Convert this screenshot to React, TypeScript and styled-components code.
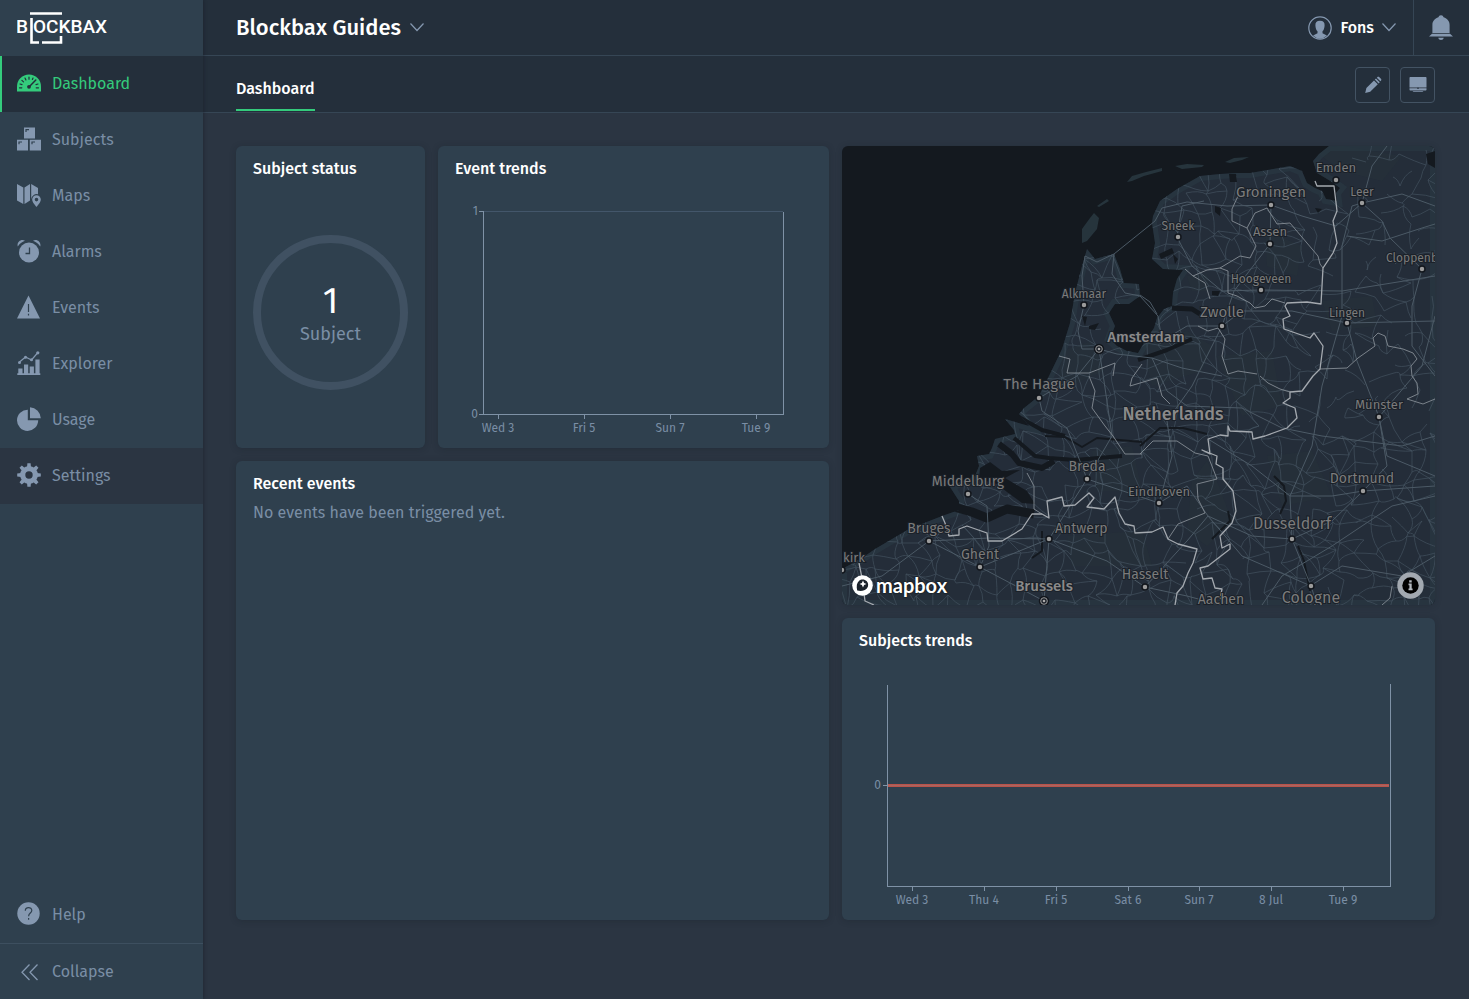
import React from "react";
import styled, { createGlobalStyle } from "styled-components";

const c = {
  page: "#2b3542",
  header: "#242f3b",
  panel: "#2f404e",
  line: "#364655",
  muted: "#7a8ea5",
  icon: "#8598b0",
  axis: "#7f92a6",
  green: "#34cb7c",
  sea: "#14191f",
  land: "#242d39",
};

const GlobalStyle = createGlobalStyle`
  *, *::before, *::after { box-sizing: border-box; }
  body {
    margin: 0;
    background: ${c.page};
    color: #fff;
    font-family: "Fira Sans", "Noto Sans", sans-serif;
    font-size: 16px;
    line-height: 22px;
  }
  a { color: inherit; text-decoration: none; }
  button { font: inherit; color: inherit; background: none; border: 0; padding: 0; cursor: pointer; }
`;

const Shell = styled.div`
  display: flex;
  min-height: 100vh;
`;

const Sidebar = styled.aside`
  position: sticky;
  top: 0;
  display: flex;
  flex-direction: column;
  flex: 0 0 203px;
  height: 100vh;
  background: ${c.panel};
  color: ${c.muted};
  box-shadow: 1px 0 3px rgba(20, 26, 34, 0.4);
`;

const Brand = styled.a`
  display: flex;
  align-items: center;
  height: 56px;
  padding-left: 17px;
`;

const Nav = styled.nav`
  display: flex;
  flex-direction: column;
  flex: 1;
`;

const NavItem = styled.a<{ $active?: boolean; $shaded?: boolean; $last?: boolean }>`
  display: flex;
  align-items: center;
  gap: 11px;
  height: 56px;
  padding: 0 0 2px 15px;
  border-left: 2px solid ${(p) => (p.$active ? c.green : "transparent")};
  background: ${(p) => (p.$active ? c.header : p.$shaded ? c.page : "transparent")};
  color: ${(p) => (p.$active ? c.green : c.muted)};
  margin-top: ${(p) => (p.$last ? "auto" : "0")};

  svg { color: ${(p) => (p.$active ? c.green : c.icon)}; }
`;

const NavLabel = styled.span`
  padding-top: 2px;
`;

const Collapse = styled.button`
  display: flex;
  align-items: center;
  gap: 11px;
  height: 56px;
  padding-left: 17px;
  border-top: 1px solid #3d4f5f;
  text-align: left;
`;

const Main = styled.main`
  flex: 1;
  min-width: 0;
`;

const TopBar = styled.header`
  display: flex;
  align-items: stretch;
  justify-content: space-between;
  height: 56px;
  padding-left: 33px;
  background: ${c.header};
  border-bottom: 1px solid ${c.line};
`;

const ProjectMenu = styled.button`
  display: flex;
  align-items: center;
  gap: 9px;
  font-size: 22px;
  font-weight: 500;
`;

const Account = styled.div`
  display: flex;
`;

const UserMenu = styled.button`
  display: flex;
  align-items: center;
  gap: 8px;
  padding-right: 17px;
  font-weight: 500;
`;

const BellButton = styled.button`
  display: flex;
  align-items: center;
  justify-content: center;
  width: 56px;
  padding-right: 2px;
  border-left: 1px solid ${c.line};
`;

const TabBar = styled.div`
  display: flex;
  align-items: center;
  justify-content: space-between;
  height: 57px;
  padding: 1px 34px 0 33px;
  background: ${c.header};
  border-bottom: 1px solid ${c.line};
`;

const Tab = styled.a`
  align-self: flex-end;
  padding: 0 0 9px;
  margin-bottom: 1px;
  border-bottom: 2px solid ${c.green};
  font-weight: 500;
`;

const Tools = styled.div`
  display: flex;
  gap: 10px;
`;

const ToolButton = styled.button`
  display: flex;
  align-items: center;
  justify-content: center;
  width: 35px;
  height: 36px;
  border: 1px solid #435363;
  border-radius: 4px;
`;

const Board = styled.div`
  display: grid;
  grid-template-columns: repeat(6, minmax(0, 1fr));
  grid-template-rows: 302px 144px 302px;
  gap: 13px;
  padding: 33px 34px 33px 33px;
`;

const Card = styled.section<{ $col: string; $row: string }>`
  grid-column: ${(p) => p.$col};
  grid-row: ${(p) => p.$row};
  display: flex;
  flex-direction: column;
  min-width: 0;
  padding: 12px 17px 3px;
  border-radius: 6px;
  background: ${c.panel};
  box-shadow: 0 1px 6px rgba(20, 26, 34, 0.25);
`;

const MapCard = styled(Card)`
  position: relative;
  padding: 0;
  overflow: hidden;
  background: ${c.sea};
`;

const CardTitle = styled.h2`
  margin: 0;
  font-size: 16px;
  font-weight: 500;
  line-height: 22px;
`;

const CardText = styled.p`
  margin: 7px 0 0;
  color: ${c.muted};
`;

const RingArea = styled.div`
  display: flex;
  flex: 1;
  align-items: center;
  justify-content: center;
`;

const Ring = styled.div`
  display: flex;
  flex-direction: column;
  align-items: center;
  justify-content: center;
  width: 100%;
  max-width: 200px;
  aspect-ratio: 1;
  border: 8px solid #405162;
  border-radius: 50%;
  color: ${c.muted};
  font-size: 18px;
  line-height: 24px;
`;

const Count = styled.strong`
  color: #fff;
  font-size: 36px;
  font-weight: 400;
  line-height: 42px;
`;

const ChartSvg = styled.svg`
  flex: 1;
  width: 100%;
  min-height: 0;
  margin-top: 10px;
  overflow: visible;

  text { fill: ${c.muted}; font-size: 12px; }
  line, path { shape-rendering: crispEdges; }
`;

const MapSvg = styled.svg`
  width: 100%;
  height: 100%;
`;

const MapBrand = styled.a`
  position: absolute;
  left: 10px;
  bottom: 9px;
  display: flex;
  align-items: center;
  gap: 3px;
  font-family: Lato, sans-serif;
  font-size: 20px;
  font-weight: 700;
  text-shadow: 0 0 2px #000;
`;

const InfoButton = styled.button`
  position: absolute;
  right: 11px;
  bottom: 6px;
  display: flex;
`;

/* ---------- icons ---------- */

const Icon = ({ children, size = 24 }: { children: React.ReactNode; size?: number }) => (
  <svg width={size} height={size} viewBox="0 0 24 24" fill="currentColor" aria-hidden="true">
    {children}
  </svg>
);

const GaugeIcon = () => (
  <Icon>
    <path d="M0 20.500V15.500a12 12 0 0 1 24 0v5z" />
    <g stroke={c.header} strokeWidth="1.200" strokeLinecap="round" fill="none">
      <path d="M12 6v2.200M8 7l.9 2M16 7l-.6 1.400M4.900 9.400l1.600 1.500M3 13l2 .6M2.500 16.800h2.300M21.500 16.800h-2.300M21 13l-2 .6" />
      <path d="M18.800 9l-6.300 6.500" strokeWidth="1.500" />
    </g>
    <circle cx="12" cy="15.800" r="1.900" fill={c.header} />
  </Icon>
);

const BoxesIcon = () => (
  <Icon>
    <path d="M7 .5h11v11H7zM0 12.800h11v10.700H0zM12.800 12.800H24v10.700H12.800z" />
    <path d="M9 5V2.700h3M2 17.300V15h3M15 17.300V15h3" stroke={c.panel} strokeWidth="1.200" fill="none" />
  </Icon>
);

const MapIcon = () => (
  <Icon>
    <path d="M0 1l6.300 3.500V21L0 17.500zM7.500 4.500L13 1v16.500L7.500 21zM14.200 1L21 5v6.300a5.500 5.500 0 0 0-6.800 4.900z" />
    <path fillRule="evenodd" d="M19.500 12.300a4.300 4.300 0 0 0-4.300 4.300c0 3 4.300 7.400 4.300 7.400s4.300-4.400 4.300-7.400a4.300 4.300 0 0 0-4.300-4.300zm0 2.500a1.800 1.800 0 1 1 0 3.600 1.800 1.800 0 0 1 0-3.600z" />
  </Icon>
);

const AlarmIcon = () => (
  <Icon>
    <circle cx="12" cy="13.500" r="10" />
    <path d="M.8 7.500C-.6 3.500 4-.6 8 1.800 5 2.900 2.600 4.800.8 7.500zM23.200 7.500C24.600 3.500 20-.6 16 1.800c3 1.100 5.400 3 7.200 5.700z" />
    <path d="M12.500 8.500v6H8.500" stroke={c.panel} strokeWidth="1.300" fill="none" />
  </Icon>
);

const WarningIcon = () => (
  <Icon>
    <path d="M11.500.5L23 23.500H0z" />
    <path d="M11.500 9v8M11.500 18.800v1.700" stroke={c.panel} strokeWidth="1.200" />
  </Icon>
);

const ExplorerIcon = () => (
  <Icon>
    <path d="M.3 22.300h23V24H.3zM1.300 17.500h4.200v5H1.300zM7 13.500h4.200v9H7zM12.700 15.500h4.200v7h-4.200zM18.400 8.500h4.200v14h-4.200z" />
    <path d="M2.500 11l6-5 6 3L20.500 2" stroke="currentColor" strokeWidth="1.200" fill="none" />
    <circle cx="2.500" cy="11.500" r="1.500" /><circle cx="8.500" cy="6.300" r="1.500" />
    <circle cx="14.500" cy="8.800" r="1.500" /><circle cx="20.800" cy="1.800" r="1.600" />
  </Icon>
);

const PieIcon = () => (
  <Icon>
    <path d="M10.800 2.700v10.600h10.400A10.600 10.600 0 1 1 10.800 2.700z" />
    <path d="M13 .3A11.200 11.200 0 0 1 23.800 11.300H13z" />
  </Icon>
);

const teeth = [0, 45, 90, 135, 180, 225, 270, 315];
const GearIcon = () => (
  <Icon>
    <circle cx="12" cy="12" r="6.300" fill="none" stroke="currentColor" strokeWidth="5.200" />
    {teeth.map((a) => (
      <path key={a} d="M10 4.200L10.400.2h3.200L14 4.200z" transform={`rotate(${a} 12 12)`} />
    ))}
  </Icon>
);

const HelpIcon = () => (
  <Icon>
    <circle cx="11.500" cy="11.500" r="11.200" />
    <path d="M8.300 8.700c0-4.200 6.500-4 6.500-.3 0 2.700-3.200 2.600-3.200 5.800M11.600 16v1.700" stroke={c.panel} strokeWidth="1.200" fill="none" />
  </Icon>
);

const CollapseIcon = () => (
  <Icon>
    <path d="M12.500 4.500L5 12.300l7.500 7.700M20.500 4.500L13 12.300l7.500 7.700" stroke={c.icon} strokeWidth="1.300" fill="none" />
  </Icon>
);

const ChevronDown = () => (
  <svg width="14" height="10" viewBox="0 0 14 10" fill="none" stroke={c.icon} strokeWidth="1.200" aria-hidden="true">
    <path d="M.5 .5L7 7.500 13.500 .5" />
  </svg>
);

const UserIcon = () => (
  <svg width="24" height="24" viewBox="0 0 24 24" aria-hidden="true">
    <circle cx="12" cy="12" r="11.200" fill="none" stroke={c.icon} strokeWidth="1.200" />
    <path d="M12 4.700c3.300 0 4.900 1.700 4.600 5-.2 2.700-1 4.500-2.100 5.600v2l4.400 2.300A10.500 10.500 0 0 1 12 22.700a10.500 10.500 0 0 1-6.900-3.100l4.400-2.300v-2c-1.100-1.100-1.900-2.900-2.100-5.600-.3-3.300 1.300-5 4.600-5z" fill={c.icon} />
  </svg>
);

const BellIcon = () => (
  <svg width="24" height="26" viewBox="0 0 24 26" fill={c.icon} aria-hidden="true">
    <path d="M12 .3a2.600 2.600 0 0 1 2.600 2c3.700 1.100 6 4 6 7.700v8H3.400V10c0-3.700 2.300-6.600 6-7.700A2.600 2.600 0 0 1 12 .3zM3 18.800h18l3 2.700H0zM9.300 22.700h5.400c-.3 3-5.100 3-5.400 0z" />
  </svg>
);

const PencilIcon = () => (
  <svg width="18" height="18" viewBox="0 0 18 18" fill={c.icon} aria-hidden="true">
    <path d="M1.200 17l1.200-5L10 4.400 13.800 8.200 6.200 15.800zM10.800 3.600L12 2.400l3.800 3.800-1.200 1.200zM12.800 1.700l.5-.5c.6-.6 1.500-.6 2.100 0l1.500 1.500c.6.600.6 1.500 0 2.100l-.5.500z" />
  </svg>
);

const ScreenIcon = () => (
  <svg width="18" height="18" viewBox="0 0 18 18" fill={c.icon} aria-hidden="true">
    <path d="M1.500 1h15c.6 0 1 .4 1 1v9.500H.5V2c0-.6.400-1 1-1zM.5 12.300h17v1.200c0 .6-.4 1-1 1h-15c-.6 0-1-.4-1-1zM3.500 15.200h11l-1 .8h-9z" />
    <circle cx="9" cy="12.200" r=".8" fill={c.header} />
  </svg>
);

const Logo = () => (
  <svg width="92" height="36" viewBox="17 10 92 36" role="img" aria-label="Blockbax">
    <g fill="#fff" fontFamily="Roboto, sans-serif" fontSize="19" fontWeight="500">
      <text x="16" y="33">B</text>
      <text x="33" y="33">OCKBAX</text>
    </g>
    <path d="M30 13.500h32M31.500 18v24.500H39M42 42.500h19V36" stroke="#fff" strokeWidth="2.600" fill="none" />
  </svg>
);

/* ---------- charts ---------- */

type Tick = { x: number; label: string };

const eventTicks: Tick[] = [
  { x: 43, label: "Wed 3" },
  { x: 129, label: "Fri 5" },
  { x: 215, label: "Sun 7" },
  { x: 301, label: "Tue 9" },
];

const subjectTicks: Tick[] = [
  { x: 53, label: "Wed 3" },
  { x: 125, label: "Thu 4" },
  { x: 197, label: "Fri 5" },
  { x: 269, label: "Sat 6" },
  { x: 340, label: "Sun 7" },
  { x: 412, label: "8 Jul" },
  { x: 484, label: "Tue 9" },
];

const TimeAxis = ({ ticks }: { ticks: Tick[] }) => (
  <g textAnchor="middle">
    {ticks.map((t) => (
      <g key={t.label}>
        <line x1={t.x + 0.5} x2={t.x + 0.5} y1="225" y2="229" stroke={c.axis} />
        <text x={t.x} y="242">{t.label}</text>
      </g>
    ))}
  </g>
);

const EventChart = () => (
  <ChartSvg viewBox="0 0 357 255" role="img" aria-label="Event trends">
    <line x1="29" x2="328" y1="21.500" y2="21.500" stroke="#43566a" />
    <path d="M24 21.500H28.500V224.500H328.500V21.500M24 224.500H29" fill="none" stroke={c.axis} />
    <text x="23" y="25" textAnchor="end">1</text>
    <text x="23" y="228" textAnchor="end">0</text>
    <TimeAxis ticks={eventTicks} />
  </ChartSvg>
);

const SubjectChart = () => (
  <ChartSvg viewBox="0 0 559 255" role="img" aria-label="Subjects trends">
    <path d="M28.500 23V224.500H531.500V22M24 123.500H28" fill="none" stroke={c.axis} />
    <path d="M29 123.500H530" stroke="#b9534b" strokeWidth="3" />
    <path d="M29 123.500H530" stroke="#a96660" strokeWidth="1" />
    <text x="22" y="127" textAnchor="end">0</text>
    <TimeAxis ticks={subjectTicks} />
  </ChartSvg>
);

/* ---------- map ---------- */

const coast =
  "M487 0L477 8 471 15 475 27 490 36 498 42 494 47 495 55 484 53 480 45 473 42 465 37 460 25 448 20 431 23 408 27 395 27 378 28 358 30 335 43 318 55 311 70 310 77 313 97 310 113 321 123 341 124 335 133 331 147 330 160 322 163 315 172 312 182 303 195 296 207 285 205 275 200 268 193 273 180 267 167 273 158 287 158 298 150 297 138 282 137 278 123 272 108 253 113 245 103 240 120 233 147 228 177 220 203 207 230 197 250 182 262 177 268 187 280 163 273 172 284 173 288 153 293 150 302 147 308 135 310 137 320 133 330 118 336 108 341 117 355 117 364 100 370 67 383 33 403 20 412 0 423V459H593V0Z";

const islands =
  "M252 67L257 72 255 83 245 95 240 97 240 83 248 72ZM255 60L265 53 267 55 257 61ZM285 36L290 30 304 26 320 22 320 25 302 30 290 35ZM333 20L345 18 362 19 360 21 340 23ZM383 16L392 12 407 11 400 14 388 17Z";

const greens =
  "M300 196L345 185 370 200 360 225 310 240ZM423 85L460 100 455 130 425 120ZM345 130L365 128 368 145 350 145ZM250 305L290 300 300 345 255 345ZM375 210L430 205 440 260 400 270ZM225 390L300 385 310 420 230 420ZM480 155L530 150 535 180 490 185ZM470 3L500 0 560 10 540 35 500 25ZM365 315L375 335 390 375 365 400 345 385 350 335ZM425 310L470 305 490 350 440 360ZM220 205L250 195 262 225 215 245Z";

const waters = [
  { d: "M172 292L193 310 207 312 233 314 280 310", w: 4 },
  { d: "M157 298L170 308 177 317 200 322 212 315", w: 6 },
  { d: "M112 361L130 366 145 372 165 363 192 368", w: 9 },
  { d: "M177 271L200 284 223 290", w: 4 },
  { d: "M203 290L223 291 240 301 255 292 300 296", w: 2 },
  { d: "M298 300L318 282 341 282 365 288", w: 2 },
  { d: "M330 162L350 163 358 168", w: 5 },
  { d: "M296 214L325 204 350 193", w: 4 },
  { d: "M432 330L442 340 444 355 438 368", w: 2 },
  { d: "M386 365L388 375 378 385 370 393", w: 2 },
  { d: "M456 400L462 415 465 430 468 445", w: 2 },
  { d: "M200 385L200 405 190 412", w: 2 },
];

const lakes =
  "M138 322L148 316 160 325 178 324 163 332 185 345 193 358 180 357 165 346 155 338 137 333ZM387 28L394 28 395 36 388 36ZM317 108L330 102 332 107 319 113ZM373 60L379 62 378 70 373 66ZM584 8L593 5V22L586 18ZM473 62L480 63 476 67ZM240 170L245 171 243 180ZM247 180L257 177 253 184 247 183ZM370 145L378 145 376 150 370 149ZM331 108L336 113 333 118Z";

const nationalBorder = [
  "473,35 475,40 492,40 495,65 491,75 495,97 491,107 481,122 479,158 465,156 445,157 443,160 448,170 441,173 442,183 468,192 472,187 481,200 478,223 471,230 460,245 448,246 448,252 441,257 453,262 455,272 445,282 423,290 411,293 410,286 388,285 386,280 386,290 378,289 366,293 368,308 360,304 375,310 374,318 381,322 381,333 391,345 394,365 390,377 378,390 380,402 388,398 388,403 366,420 358,422 361,433 370,432 373,442 380,443 378,453",
  "100,370 103,377 107,390 117,389 117,383 125,380 145,387 146,395 160,395 180,383 190,368 200,368 207,372 205,355 220,351 222,360 233,359 247,347 252,352 245,361 262,363 273,351 277,367 283,378 292,380 293,387 310,386 321,381 326,393 336,398 355,403 351,417 346,427 341,440 335,447 333,459",
  "17,417 20,432 23,455 32,459",
];

const regionBorders = [
  "396,50 390,63 390,75 405,82 413,67 425,62 435,78 448,77 476,110 478,118 481,122",
  "405,82 414,100 408,112 398,110 378,122 365,124 351,130 343,123",
  "351,130 363,137 368,153",
  "378,122 386,125 386,147 395,150 408,157 413,162 423,160 430,153 443,157",
  "356,180 366,185 376,182 383,193 380,210 386,228 396,225 415,228",
  "478,223 505,222 516,212 533,200 531,192 536,187 543,190 546,200 561,203 571,207 575,213 569,220 570,230 575,237 576,248 565,253 581,258 593,253",
  "418,230 426,237 438,243 448,246",
  "298,308 311,295 335,295 353,307 366,310 375,333 355,338 356,353 363,367 336,378 326,393",
  "247,230 253,245 250,262 263,280 271,290 283,308 300,308",
  "185,327 192,340 192,363 200,368",
  "217,210 228,213 225,227 247,227 273,217 271,230",
  "300,218 290,232 288,240 298,237 315,232 320,250 328,258",
  "550,440 548,452 540,459",
];

const highways = [
  "243,110 240,130 242,159 236,185 240,203 257,203 275,208 310,212 340,222 380,230",
  "243,110 255,116 272,108 313,75 320,62 345,56 385,60 429,59",
  "272,108 270,128 283,147 298,150 316,170 320,195 345,180 380,180 392,145 428,98 429,59",
  "257,203 235,230 197,252 200,265 225,282 245,333 207,393 202,455",
  "257,203 262,235 270,290 245,333 317,357 345,340 366,370 400,410 469,440",
  "138,421 207,393 265,415 303,441 345,450 379,459",
  "0,440 40,430 87,395 138,421 202,455",
  "317,357 330,310 325,275 350,240 380,180 400,165 450,165 505,177 593,175",
  "366,293 410,320 448,350 490,350 521,345 593,340",
  "450,393 448,350 470,300 480,240 500,170 500,100 510,60 520,57 530,20 545,0",
  "450,393 490,375 521,345 545,320 537,271 580,220 593,170",
  "450,393 469,440 475,459",
  "450,393 410,390 366,370 345,395 303,441",
  "429,59 460,70 494,80 520,57 560,48 593,60",
  "335,91 340,60 362,55",
  "335,91 350,120 380,145 419,144 500,145 593,130",
  "505,177 515,215 537,271 545,310 593,330",
  "126,348 145,360 147,400 138,421",
  "87,395 147,392 207,393",
  "505,90 540,95 580,82 593,78",
  "520,57 540,75 548,92 580,123 570,160 570,200 593,230",
  "420,459 440,430 490,400 550,360 593,350",
  "468,440 500,420 560,430 593,410",
  "310,212 325,245 345,260 400,262 440,282 480,290 560,300 593,290",
];

/* Minor roads: a jittered mesh whose links bend slightly between junctions. */
const buildMinorRoads = () => {
  let seed = 41;
  const rnd = () => {
    seed = (seed * 16807) % 2147483647;
    return seed / 2147483647;
  };
  const step = 15;
  const cols = 42;
  const rows = 33;
  const pts: [number, number][][] = [];
  for (let r = 0; r < rows; r++) {
    pts.push([]);
    for (let k = 0; k < cols; k++) {
      pts[r].push([Math.round(k * step - 8 + (rnd() - 0.5) * 16), Math.round(r * step - 8 + (rnd() - 0.5) * 16)]);
    }
  }
  let d = "";
  const link = (a: [number, number], b: [number, number]) => {
    const mx = Math.round((a[0] + b[0]) / 2 + (rnd() - 0.5) * 8);
    const my = Math.round((a[1] + b[1]) / 2 + (rnd() - 0.5) * 8);
    d += `M${a[0]} ${a[1]}Q${mx} ${my} ${b[0]} ${b[1]}`;
  };
  for (let r = 0; r < rows - 1; r++) {
    for (let k = 0; k < cols - 1; k++) {
      const sparse = k > 30 && r < 20;
      const keep = sparse ? 0.4 : 0.8;
      if (rnd() < keep) link(pts[r][k], pts[r][k + 1]);
      if (rnd() < keep) link(pts[r][k], pts[r + 1][k]);
      if (rnd() < keep * 0.35) link(pts[r][k], pts[r + 1][k + 1]);
    }
  }
  return d;
};
const minorRoads = buildMinorRoads();

type Place = {
  name: string;
  x: number;
  y: number;
  size: number;
  dot?: [number, number];
  capital?: boolean;
  bold?: boolean;
  start?: boolean;
};

const places: Place[] = [
  { name: "Emden", x: 494, y: 26, size: 13, dot: [494, 34] },
  { name: "Groningen", x: 429, y: 51, size: 15, dot: [429, 59] },
  { name: "Leer", x: 520, y: 50, size: 12, dot: [520, 57] },
  { name: "Sneek", x: 336, y: 84, size: 12, dot: [336, 91] },
  { name: "Assen", x: 428, y: 90, size: 13, dot: [428, 98] },
  { name: "Cloppenburg", x: 544, y: 116, size: 12, dot: [580, 123], start: true },
  { name: "Hoogeveen", x: 419, y: 137, size: 12, dot: [419, 144] },
  { name: "Alkmaar", x: 242, y: 152, size: 12, dot: [242, 159] },
  { name: "Zwolle", x: 380, y: 171, size: 15, dot: [380, 180] },
  { name: "Lingen", x: 505, y: 171, size: 12, dot: [505, 177] },
  { name: "Amsterdam", x: 304, y: 196, size: 15, dot: [257, 203], capital: true, bold: true },
  { name: "The Hague", x: 197, y: 243, size: 15, dot: [197, 252] },
  { name: "Netherlands", x: 331, y: 274, size: 18, bold: true },
  { name: "Münster", x: 537, y: 263, size: 13, dot: [537, 271] },
  { name: "Breda", x: 245, y: 325, size: 14, dot: [245, 333] },
  { name: "Dortmund", x: 520, y: 337, size: 14, dot: [521, 345] },
  { name: "Middelburg", x: 126, y: 340, size: 14, dot: [126, 348] },
  { name: "Eindhoven", x: 317, y: 350, size: 13, dot: [317, 357] },
  { name: "Bruges", x: 87, y: 387, size: 14, dot: [87, 395] },
  { name: "Antwerp", x: 213, y: 387, size: 14, dot: [207, 393], start: true },
  { name: "Dusseldorf", x: 450, y: 383, size: 16, dot: [450, 393] },
  { name: "kirk", x: 1, y: 416, size: 13, dot: [0, 424], start: true },
  { name: "Ghent", x: 138, y: 413, size: 14, dot: [138, 421] },
  { name: "Brussels", x: 202, y: 445, size: 15, dot: [202, 455], capital: true, bold: true },
  { name: "Hasselt", x: 303, y: 433, size: 14, dot: [303, 441] },
  { name: "Aachen", x: 379, y: 458, size: 14 },
  { name: "Cologne", x: 469, y: 457, size: 16, dot: [469, 440] },
];

const RegionMap = () => (
  <MapSvg viewBox="0 0 593 459" preserveAspectRatio="xMidYMid slice" role="img" aria-label="Map of the Netherlands">
    <defs>
      <clipPath id="land"><path d={coast} /></clipPath>
    </defs>
    <path d={coast} fill={c.land} />
    <path d={islands} fill="#26343c" />
    <g clipPath="url(#land)">
      <path d={greens} fill="#26383c" opacity="0.25" />
      <path d={coast} fill="none" stroke="#2a3c45" strokeWidth="10" opacity="0.5" />
      <path d={minorRoads} fill="none" stroke="#445361" strokeWidth="0.800" opacity="0.85" />
      <path d={lakes} fill={c.sea} />
      {waters.map((w) => (
        <path key={w.d} d={w.d} fill="none" stroke={c.sea} strokeWidth={w.w} strokeLinejoin="round" />
      ))}
    </g>
    <g fill="none" stroke="#4c5a66" strokeLinejoin="round">
      {highways.map((p) => <polyline key={p} points={p} />)}
      <path d="M298 149L308 156 315 168" />
    </g>
    <g fill="none" stroke="#858c94" strokeWidth="0.900" strokeLinejoin="round">
      {regionBorders.map((p) => <polyline key={p} points={p} />)}
    </g>
    <g fill="none" stroke="#a4a9af" strokeWidth="1.300" strokeLinejoin="round">
      {nationalBorder.map((p) => <polyline key={p} points={p} />)}
    </g>
    {places.map((p) => (
      <g key={p.name}>
        {p.dot && <circle cx={p.dot[0]} cy={p.dot[1]} r={p.capital ? 4.5 : 3} fill={p.capital ? "#1c2129" : "#9b9b9b"} stroke="#12161c" strokeWidth="1.500" />}
        {p.dot && p.capital && (
          <>
            <circle cx={p.dot[0]} cy={p.dot[1]} r="3.300" fill="none" stroke="#999" />
            <circle cx={p.dot[0]} cy={p.dot[1]} r="1.300" fill="#aaa" />
          </>
        )}
        <text
          x={p.x}
          y={p.y}
          fontSize={p.size}
          fontWeight={p.bold ? 500 : 400}
          textAnchor={p.start ? "start" : "middle"}
          fill={p.bold ? "#8a8a8a" : "#7b7b7b"}
          stroke="#1a2028"
          strokeWidth="2"
          paintOrder="stroke"
        >
          {p.name}
        </text>
      </g>
    ))}
  </MapSvg>
);

const MapboxMark = () => (
  <svg width="21" height="21" viewBox="0 0 21 21" aria-hidden="true">
    <circle cx="10.500" cy="10.500" r="10.300" fill="#fff" />
    <path d="M5.200 15.600c-1-4.600-.4-7.800 1.700-9.700 2.200-2 5.700-1.900 7.700.1s2.200 5.400.2 7.600c-2 2.100-5 2.800-9.600 2z" fill="#1b222b" />
    <path d="M11 5.500l1.100 2.400 2.400 1.100-2.400 1.100L11 12.500 9.900 10.100 7.500 9l2.400-1.100z" fill="#fff" />
  </svg>
);

const InfoIcon = () => (
  <svg width="27" height="27" viewBox="0 0 27 27" aria-hidden="true">
    <circle cx="13.500" cy="13.500" r="13.200" fill="#a3a9b1" />
    <circle cx="13.500" cy="13.500" r="8.200" fill="#000" />
    <path d="M12.200 8.200h2.500v2.300h-2.500zM11.500 11.600h3.200v5h.9v1.700h-4.100v-1.700h.9v-3.300h-.9z" fill="#b4b9c0" />
  </svg>
);

/* ---------- page ---------- */

const navItems = [
  { label: "Dashboard", icon: <GaugeIcon />, active: true },
  { label: "Subjects", icon: <BoxesIcon /> },
  { label: "Maps", icon: <MapIcon /> },
  { label: "Alarms", icon: <AlarmIcon /> },
  { label: "Events", icon: <WarningIcon /> },
  { label: "Explorer", icon: <ExplorerIcon /> },
  { label: "Usage", icon: <PieIcon /> },
  { label: "Settings", icon: <GearIcon />, shaded: true },
  { label: "Help", icon: <HelpIcon />, last: true },
];

export default function App() {
  return (
    <>
      <GlobalStyle />
      <Shell>
        <Sidebar>
          <Brand href="#home"><Logo /></Brand>
          <Nav aria-label="Main">
            {navItems.map((n) => (
              <NavItem
                key={n.label}
                href={`#${n.label.toLowerCase()}`}
                $active={n.active}
                $shaded={n.shaded}
                $last={n.last}
                aria-current={n.active ? "page" : undefined}
              >
                {n.icon}
                <NavLabel>{n.label}</NavLabel>
              </NavItem>
            ))}
          </Nav>
          <Collapse type="button"><CollapseIcon />Collapse</Collapse>
        </Sidebar>
        <Main>
          <TopBar>
            <ProjectMenu type="button" aria-haspopup="menu">Blockbax Guides<ChevronDown /></ProjectMenu>
            <Account>
              <UserMenu type="button" aria-haspopup="menu"><UserIcon />Fons<ChevronDown /></UserMenu>
              <BellButton type="button" aria-label="Notifications"><BellIcon /></BellButton>
            </Account>
          </TopBar>
          <TabBar>
            <Tab href="#dashboard">Dashboard</Tab>
            <Tools>
              <ToolButton type="button" aria-label="Edit dashboard"><PencilIcon /></ToolButton>
              <ToolButton type="button" aria-label="Full screen"><ScreenIcon /></ToolButton>
            </Tools>
          </TabBar>
          <Board>
            <Card $col="1 / 2" $row="1 / 2">
              <CardTitle>Subject status</CardTitle>
              <RingArea>
                <Ring><Count>1</Count>Subject</Ring>
              </RingArea>
            </Card>
            <Card $col="2 / 4" $row="1 / 2">
              <CardTitle>Event trends</CardTitle>
              <EventChart />
            </Card>
            <MapCard $col="4 / 7" $row="1 / 3">
              <RegionMap />
              <MapBrand href="#mapbox"><MapboxMark />mapbox</MapBrand>
              <InfoButton type="button" aria-label="Map attribution"><InfoIcon /></InfoButton>
            </MapCard>
            <Card $col="1 / 4" $row="2 / 4">
              <CardTitle>Recent events</CardTitle>
              <CardText>No events have been triggered yet.</CardText>
            </Card>
            <Card $col="4 / 7" $row="3 / 4">
              <CardTitle>Subjects trends</CardTitle>
              <SubjectChart />
            </Card>
          </Board>
        </Main>
      </Shell>
    </>
  );
}
